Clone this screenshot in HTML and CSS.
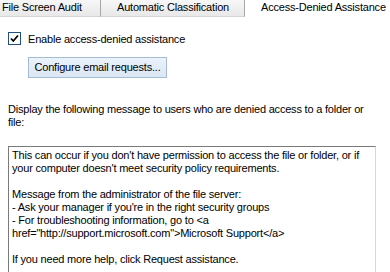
FILE: index.html
```html
<!DOCTYPE html>
<html>
<head>
<meta charset="utf-8">
<link rel="stylesheet" href="styles.css">
</head>
<body>
<div class="page">
  <div class="tabs">
    <div class="tab tab-first">File Screen Audit</div>
    <div class="tab tab-second">Automatic Classification</div>
    <div class="tab tab-active">Access-Denied Assistance</div>
  </div>
  <div class="content">
    <label class="check-row">
      <span class="checkbox">
        <svg width="9" height="9" viewBox="0 0 9 9"><path d="M1 4.5 L3.3 7 L8 1.5" fill="none" stroke="#000" stroke-width="1.8"/></svg>
      </span>
      <span class="check-label">Enable access-denied assistance</span>
    </label>
    <div class="btn-row">
      <button class="btn">Configure email requests...</button>
    </div>
    <p class="desc">Display the following message to users who are denied access to a folder or file:</p>
    <div class="msgbox">
      <p>This can occur if you don't have permission to access the file or folder, or if your computer doesn't meet security policy requirements.</p>
      <p>Message from the administrator of the file server:<br>- Ask your manager if you're in the right security groups<br>- For troubleshooting information, go to &lt;a href="http://support.microsoft.com"&gt;Microsoft Support&lt;/a&gt;</p>
      <p>If you need more help, click Request assistance.</p>
    </div>
  </div>
</div>
</body>
</html>
```
FILE: styles.css
```css
html, body {
  margin: 0;
  padding: 0;
  background: #fff;
}
.page {
  width: 390px;
  height: 272px;
  overflow: hidden;
  font-family: "Liberation Sans", Arial, sans-serif;
  font-size: 11px;
  letter-spacing: -0.2px;
  color: #000;
}
.tabs {
  display: flex;
  height: 17px;
}
.tab {
  box-sizing: border-box;
  height: 17px;
  line-height: 15px;
  white-space: nowrap;
  flex: none;
}
.tab-first {
  width: 101px;
  padding-left: 2px;
  background: linear-gradient(#f7f7f7, #e8e8e8);
  border-right: 1px solid #a7a7a7;
  border-bottom: 1px solid #d4d4d4;
}
.tab-second {
  width: 144px;
  padding-left: 16px;
  background: linear-gradient(#f7f7f7, #e8e8e8);
  border-right: 1px solid #a7a7a7;
  border-bottom: 1px solid #d4d4d4;
}
.tab-active {
  padding-left: 16px;
  background: #fff;
}
.content {
  padding: 15px 0 0 8px;
}
.check-row {
  display: flex;
  align-items: center;
  gap: 7px;
  height: 13px;
}
.checkbox {
  box-sizing: border-box;
  width: 13px;
  height: 13px;
  border: 1px solid #1c5180;
  background: #fff;
  display: flex;
  align-items: center;
  justify-content: center;
}
.btn-row {
  padding: 12px 0 0 20px;
}
.btn {
  box-sizing: border-box;
  height: 21px;
  width: 139px;
  padding: 0 0 1px 0;
  font: inherit;
  letter-spacing: inherit;
  color: #000;
  background: linear-gradient(#eaf2fb, #dbe7f4);
  border: 1px solid #a4bcd4;
  border-radius: 0;
}
.desc {
  margin: 25px 0 0 0;
  width: 356px;
  line-height: 13px;
}
.msgbox {
  box-sizing: border-box;
  width: 368px;
  height: 140px;
  margin-top: 17px;
  padding: 2px 3px;
  border-top: 1px solid #7a7a7a;
  border-left: 1px solid #7a7a7a;
  border-right: 1px solid #d8d8d8;
  line-height: 13px;
}
.msgbox p {
  margin: 0 0 13px 0;
}
```
